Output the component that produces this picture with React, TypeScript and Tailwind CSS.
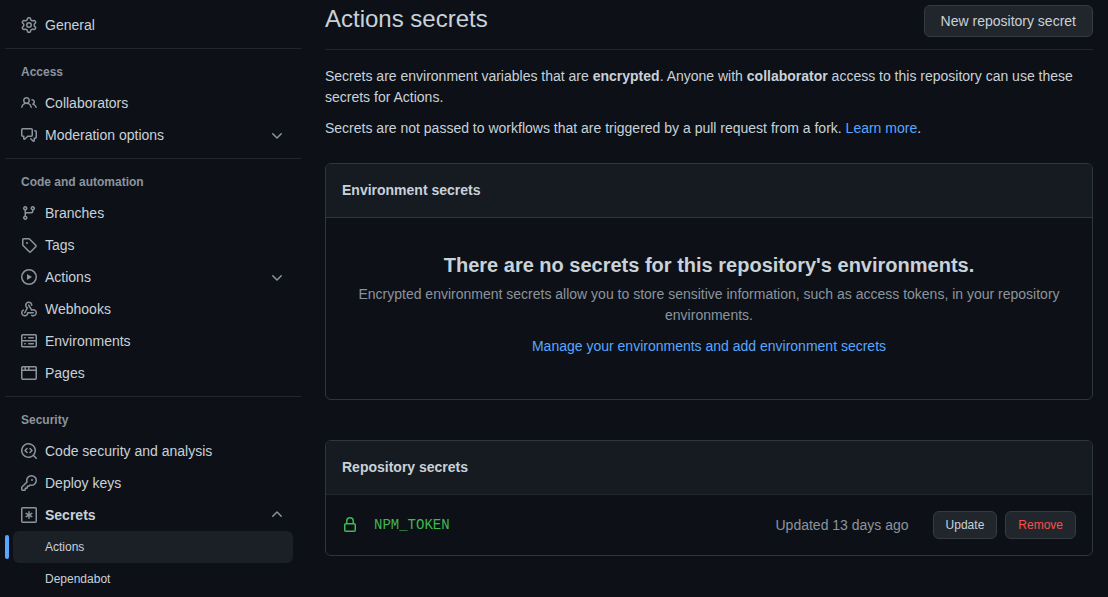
import type { ReactNode } from "react";

type IconName =
  | "gear" | "people" | "discussion" | "branch" | "tag" | "play" | "webhook" | "server"
  | "browser" | "codescan" | "key" | "asterisk" | "chevronDown" | "chevronUp" | "lock";

const iconPaths: Record<IconName, string[]> = {
  gear: [
    "M7.429 1.525a6.593 6.593 0 011.142 0c.036.003.108.036.137.146l.289 1.105c.147.56.55.967.997 1.189.174.086.341.183.501.29.417.278.97.423 1.53.27l1.102-.303c.11-.03.175.016.195.046.219.31.41.641.573.989.014.031.022.11-.059.19l-.815.806c-.411.406-.562.957-.53 1.456a4.588 4.588 0 010 .582c-.032.499.119 1.05.53 1.456l.815.806c.08.08.073.159.059.19a6.494 6.494 0 01-.573.99c-.02.029-.086.074-.195.045l-1.103-.303c-.559-.153-1.112-.008-1.529.27-.16.107-.327.204-.5.29-.449.222-.851.628-.998 1.189l-.289 1.105c-.029.11-.101.143-.137.146a6.613 6.613 0 01-1.142 0c-.036-.003-.108-.037-.137-.146l-.289-1.105c-.147-.56-.55-.967-.997-1.189a4.502 4.502 0 01-.501-.29c-.417-.278-.97-.423-1.53-.27l-1.102.303c-.11.03-.175-.016-.195-.046a6.492 6.492 0 01-.573-.989c-.014-.031-.022-.11.059-.19l.815-.806c.411-.406.562-.957.53-1.456a4.587 4.587 0 010-.582c.032-.499-.119-1.05-.53-1.456l-.815-.806c-.08-.08-.073-.159-.059-.19a6.44 6.44 0 01.573-.99c.02-.029.086-.075.195-.045l1.103.303c.559.153 1.112.008 1.529-.27.16-.107.327-.204.5-.29.449-.222.851-.628.998-1.189l.289-1.105c.029-.11.101-.143.137-.146zM8 0c-.236 0-.47.01-.701.03-.743.065-1.29.615-1.458 1.261l-.29 1.106c-.017.066-.078.158-.211.224a5.994 5.994 0 00-.668.386c-.123.082-.233.09-.3.071L3.27 2.776c-.644-.177-1.392.02-1.82.63a7.977 7.977 0 00-.704 1.217c-.315.675-.111 1.422.363 1.891l.815.806c.05.048.098.147.088.294a6.084 6.084 0 000 .772c.01.147-.038.246-.088.294l-.815.806c-.474.469-.678 1.216-.363 1.891.2.428.436.835.704 1.218.428.609 1.176.806 1.82.63l1.103-.303c.066-.019.176-.011.299.071.213.143.436.272.668.386.133.066.194.158.212.224l.289 1.106c.169.646.715 1.196 1.458 1.26a8.094 8.094 0 001.402 0c.743-.064 1.29-.614 1.458-1.26l.29-1.106c.017-.066.078-.158.211-.224a5.98 5.98 0 00.668-.386c.123-.082.233-.09.3-.071l1.102.302c.644.177 1.392-.02 1.82-.63.268-.382.505-.789.704-1.217.315-.675.111-1.422-.364-1.891l-.814-.806c-.05-.048-.098-.147-.088-.294a6.1 6.1 0 000-.772c-.01-.147.039-.246.088-.294l.814-.806c.475-.469.679-1.216.364-1.891a7.992 7.992 0 00-.704-1.218c-.428-.609-1.176-.806-1.82-.63l-1.103.303c-.066.019-.176.011-.299-.071a5.991 5.991 0 00-.668-.386c-.133-.066-.194-.158-.212-.224L10.16 1.29C9.99.645 9.444.095 8.701.031A8.094 8.094 0 008 0zm1.5 8a1.5 1.5 0 11-3 0 1.5 1.5 0 013 0zM11 8a3 3 0 11-6 0 3 3 0 016 0z",
  ],
  people: [
    "M5.5 3.5a2 2 0 100 4 2 2 0 000-4zM2 5.5a3.5 3.5 0 115.898 2.549 5.507 5.507 0 013.034 4.084.75.75 0 11-1.482.235 4.001 4.001 0 00-7.9 0 .75.75 0 01-1.482-.236A5.507 5.507 0 013.102 8.05 3.49 3.49 0 012 5.5zM11 4a.75.75 0 100 1.5 1.5 1.5 0 01.666 2.844.75.75 0 00-.416.672v.352a.75.75 0 00.574.73c1.2.289 2.162 1.2 2.522 2.372a.75.75 0 101.434-.44 5.01 5.01 0 00-2.56-3.012A3 3 0 0011 4z",
  ],
  discussion: [
    "M1.5 2.75a.25.25 0 01.25-.25h8.5a.25.25 0 01.25.25v5.5a.25.25 0 01-.25.25h-3.5a.75.75 0 00-.53.22L3.5 11.44V9.25a.75.75 0 00-.75-.75h-1a.25.25 0 01-.25-.25v-5.5zM1.75 1A1.75 1.75 0 000 2.75v5.5C0 9.216.784 10 1.75 10H2v1.543a1.457 1.457 0 002.487 1.03L7.061 10h3.189A1.75 1.75 0 0012 8.25v-5.5A1.75 1.75 0 0010.25 1h-8.5zM14.5 4.75a.25.25 0 00-.25-.25h-.5a.75.75 0 110-1.5h.5c.966 0 1.75.784 1.75 1.75v5.5A1.75 1.75 0 0114.25 12H14v1.543a1.457 1.457 0 01-2.487 1.03L9.22 12.28a.75.75 0 111.06-1.06l2.22 2.22v-2.19a.75.75 0 01.75-.75h1a.25.25 0 00.25-.25v-5.5z",
  ],
  branch: [
    "M11.75 2.5a.75.75 0 100 1.5.75.75 0 000-1.5zm-2.25.75a2.25 2.25 0 113 2.122V6A2.5 2.5 0 0110 8.5H6a1 1 0 00-1 1v1.128a2.251 2.251 0 11-1.5 0V5.372a2.25 2.25 0 111.5 0v1.836A2.492 2.492 0 016 7h4a1 1 0 001-1v-.628A2.25 2.25 0 019.5 3.25zM4.25 12a.75.75 0 100 1.5.75.75 0 000-1.5zM3.5 3.25a.75.75 0 111.5 0 .75.75 0 01-1.5 0z",
  ],
  tag: [
    "M2.5 7.775V2.75a.25.25 0 01.25-.25h5.025a.25.25 0 01.177.073l6.25 6.25a.25.25 0 010 .354l-5.025 5.025a.25.25 0 01-.354 0l-6.25-6.25a.25.25 0 01-.073-.177zm-1.5 0V2.75C1 1.784 1.784 1 2.75 1h5.025c.464 0 .91.184 1.238.513l6.25 6.25a1.75 1.75 0 010 2.474l-5.026 5.026a1.75 1.75 0 01-2.474 0l-6.25-6.25A1.75 1.75 0 011 7.775zM6 5a1 1 0 100 2 1 1 0 000-2z",
  ],
  play: [
    "M1.5 8a6.5 6.5 0 1113 0 6.5 6.5 0 01-13 0zM8 0a8 8 0 100 16A8 8 0 008 0zM6.379 5.227A.25.25 0 006 5.442v5.117a.25.25 0 00.379.214l4.264-2.559a.25.25 0 000-.428L6.379 5.227z",
  ],
  webhook: [
    "M5.5 4.25a2.25 2.25 0 014.5 0 .75.75 0 001.5 0 3.75 3.75 0 10-6.14 2.889l-2.272 4.258a.75.75 0 001.324.706L7 7.25a.75.75 0 00-.309-1.015A2.25 2.25 0 015.5 4.25z",
    "M7.364 3.607a.75.75 0 011.03.257l2.608 4.349a3.75 3.75 0 11-.628 6.785.75.75 0 01.752-1.299 2.25 2.25 0 10-.033-3.88.75.75 0 01-1.03-.256L7.107 4.636a.75.75 0 01.257-1.03z",
    "M2.9 8.776A.75.75 0 012.625 9.8 2.25 2.25 0 106 11.75a.75.75 0 01.75-.751h5.5a.75.75 0 010 1.5H7.425a3.751 3.751 0 11-5.55-3.998.75.75 0 011.024.274z",
  ],
  server: [
    "M1.75 1A1.75 1.75 0 000 2.75v4c0 .372.116.717.314 1a1.742 1.742 0 00-.314 1v4c0 .966.784 1.75 1.75 1.75h12.5A1.75 1.75 0 0016 12.75v-4c0-.372-.116-.717-.314-1 .198-.283.314-.628.314-1v-4A1.75 1.75 0 0014.25 1H1.75zm0 7.5a.25.25 0 00-.25.25v4c0 .138.112.25.25.25h12.5a.25.25 0 00.25-.25v-4a.25.25 0 00-.25-.25H1.75zM1.5 2.75a.25.25 0 01.25-.25h12.5a.25.25 0 01.25.25v4a.25.25 0 01-.25.25H1.75a.25.25 0 01-.25-.25v-4zm5.5 2A.75.75 0 017.75 4h4.5a.75.75 0 010 1.5h-4.5A.75.75 0 017 4.75zM7.75 10a.75.75 0 000 1.5h4.5a.75.75 0 000-1.5h-4.5zM3 4.75A.75.75 0 013.75 4h.5a.75.75 0 010 1.5h-.5A.75.75 0 013 4.75zM3.75 10a.75.75 0 000 1.5h.5a.75.75 0 000-1.5h-.5z",
  ],
  browser: [
    "M0 2.75C0 1.784.784 1 1.75 1h12.5c.966 0 1.75.784 1.75 1.75v10.5A1.75 1.75 0 0114.25 15H1.75A1.75 1.75 0 010 13.25V2.75zm1.75-.25a.25.25 0 00-.25.25V4.5h2v-2H1.75zM5 2.5v2h2v-2H5zm3.5 0v2h6V2.75a.25.25 0 00-.25-.25H8.5zm6 3.5h-13v7.25c0 .138.112.25.25.25h12.5a.25.25 0 00.25-.25V6z",
  ],
  codescan: [
    "M8.47 4.97a.75.75 0 000 1.06L9.94 7.5 8.47 8.97a.75.75 0 101.06 1.06l2-2a.75.75 0 000-1.06l-2-2a.75.75 0 00-1.06 0zM6.53 6.03a.75.75 0 00-1.06-1.06l-2 2a.75.75 0 000 1.06l2 2a.75.75 0 101.06-1.06L5.06 7.5l1.47-1.47z",
    "M12.246 13.307a7.5 7.5 0 111.06-1.06l2.474 2.473a.75.75 0 11-1.06 1.06l-2.474-2.473zM1.5 7.5a6 6 0 1110.386 4.094.75.75 0 00-.292.293A6 6 0 011.5 7.5z",
  ],
  key: [
    "M6.5 5.5a4 4 0 112.731 3.795.75.75 0 00-.768.18L7.44 10.5H6.25a.75.75 0 00-.75.75v1.19l-.06.06H4.25a.75.75 0 00-.75.75v1.19l-.06.06H1.75a.25.25 0 01-.25-.25v-1.69l5.024-5.023a.75.75 0 00.181-.768A3.995 3.995 0 016.5 5.5zm4-5.5a5.5 5.5 0 00-5.348 6.788L.22 11.72a.75.75 0 00-.22.53v2C0 15.216.784 16 1.75 16h2a.75.75 0 00.53-.22l.5-.5a.75.75 0 00.22-.53V14h.75a.75.75 0 00.53-.22l.5-.5a.75.75 0 00.22-.53V12h.75a.75.75 0 00.53-.22l.932-.932A5.5 5.5 0 1010.5 0zm.5 6a1 1 0 100-2 1 1 0 000 2z",
  ],
  asterisk: [
    "M0 1.75C0 .784.784 0 1.75 0h12.5C15.216 0 16 .784 16 1.75v12.5A1.75 1.75 0 0114.25 16H1.75A1.75 1.75 0 010 14.25V1.75zm1.75-.25a.25.25 0 00-.25.25v12.5c0 .138.112.25.25.25h12.5a.25.25 0 00.25-.25V1.75a.25.25 0 00-.25-.25H1.75zM8 4a.75.75 0 01.75.75V6.7l1.69-.975a.75.75 0 01.75 1.3L9.5 8l1.69.976a.75.75 0 01-.75 1.298L8.75 9.3v1.951a.75.75 0 01-1.5 0V9.299l-1.69.976a.75.75 0 01-.75-1.3L6.5 8l-1.69-.975a.75.75 0 01.75-1.3l1.69.976V4.75A.75.75 0 018 4z",
  ],
  chevronDown: [
    "M12.78 6.22a.75.75 0 010 1.06l-4.25 4.25a.75.75 0 01-1.06 0L3.22 7.28a.75.75 0 011.06-1.06L8 9.94l3.72-3.72a.75.75 0 011.06 0z",
  ],
  chevronUp: [
    "M3.22 9.78a.75.75 0 010-1.06l4.25-4.25a.75.75 0 011.06 0l4.25 4.25a.75.75 0 01-1.06 1.06L8 6.06 4.28 9.78a.75.75 0 01-1.06 0z",
  ],
  lock: [
    "M4 4v2h-.25A1.75 1.75 0 002 7.75v5.5c0 .966.784 1.75 1.75 1.75h8.5A1.75 1.75 0 0014 13.25v-5.5A1.75 1.75 0 0012.25 6H12V4a4 4 0 10-8 0zm6.5 2V4a2.5 2.5 0 10-5 0v2h5zM12 7.5h.25a.25.25 0 01.25.25v5.5a.25.25 0 01-.25.25h-8.5a.25.25 0 01-.25-.25v-5.5a.25.25 0 01.25-.25H12z",
  ],
};

function Icon({ name, className = "text-[#8b949e]" }: { name: IconName; className?: string }) {
  return (
    <svg viewBox="0 0 16 16" className={`size-4 shrink-0 fill-current ${className}`} fillRule="evenodd" aria-hidden="true">
      {iconPaths[name].map((d) => (
        <path key={d} d={d} fillRule="evenodd" />
      ))}
    </svg>
  );
}

const rowClass = "flex h-8 w-full items-center gap-2 rounded-md px-2 text-left text-sm hover:bg-[#161b22]";

function NavLink({ icon, children }: { icon: IconName; children: ReactNode }) {
  return (
    <li>
      <a href="#" className={rowClass}>
        <Icon name={icon} />
        {children}
      </a>
    </li>
  );
}

function NavToggle({ icon, open = false, children }: { icon: IconName; open?: boolean; children: ReactNode }) {
  return (
    <button type="button" aria-expanded={open} className={`${rowClass} ${open ? "font-bold" : ""}`}>
      <Icon name={icon} />
      <span className="grow">{children}</span>
      <Icon name={open ? "chevronUp" : "chevronDown"} />
    </button>
  );
}

function NavGroup({ title, children }: { title: string; children: ReactNode }) {
  return (
    <section className="mt-[7px] border-t border-[#21262d] px-2">
      <h3 className="px-2 pt-3.5 pb-1.5 text-xs leading-[18px] font-bold text-[#8b949e]">{title}</h3>
      <ul>{children}</ul>
    </section>
  );
}

function Sidebar() {
  return (
    <nav aria-label="Repository settings" className="w-[296px] shrink-0 pt-1">
      <ul className="px-2">
        <NavLink icon="gear">General</NavLink>
      </ul>
      <NavGroup title="Access">
        <NavLink icon="people">Collaborators</NavLink>
        <li>
          <NavToggle icon="discussion">Moderation options</NavToggle>
        </li>
      </NavGroup>
      <NavGroup title="Code and automation">
        <NavLink icon="branch">Branches</NavLink>
        <NavLink icon="tag">Tags</NavLink>
        <li>
          <NavToggle icon="play">Actions</NavToggle>
        </li>
        <NavLink icon="webhook">Webhooks</NavLink>
        <NavLink icon="server">Environments</NavLink>
        <NavLink icon="browser">Pages</NavLink>
      </NavGroup>
      <NavGroup title="Security">
        <NavLink icon="codescan">Code security and analysis</NavLink>
        <NavLink icon="key">Deploy keys</NavLink>
        <li>
          <NavToggle icon="asterisk" open>
            Secrets
          </NavToggle>
          <ul className="text-xs">
            <li className="relative">
              <span className="absolute top-1 -left-2 h-6 w-1 rounded-md bg-[#58a6ff]" />
              <a href="#" aria-current="page" className="flex h-8 items-center rounded-md bg-[#1b1f26] pr-2 pl-8">
                Actions
              </a>
            </li>
            <li>
              <a href="#" className="flex h-8 items-center rounded-md pr-2 pl-8 hover:bg-[#161b22]">
                Dependabot
              </a>
            </li>
          </ul>
        </li>
      </NavGroup>
    </nav>
  );
}

function Panel({ title, children }: { title: string; children: ReactNode }) {
  return (
    <section className="overflow-hidden rounded-md border border-[#30363d]">
      <h3 className="bg-[#161b22] p-4 text-sm leading-[21px] font-bold">{title}</h3>
      {children}
    </section>
  );
}

const buttonClass = "rounded-md border border-[#363b42] bg-[#21262d] hover:bg-[#30363d]";

export default function App() {
  return (
    <div className="flex min-h-screen gap-6 bg-[#0d1117] pt-[5px] pr-[15px] pl-[5px] font-['Liberation_Sans',Arial,sans-serif] text-sm leading-[21px] text-[#c9d1d9]">
      <Sidebar />
      <main className="min-w-0 grow">
        <header className="flex items-start justify-between border-b border-[#21262d] pb-3">
          <h2 className="text-2xl leading-7">Actions secrets</h2>
          <button type="button" className={`h-8 px-4 ${buttonClass}`}>
            New repository secret
          </button>
        </header>
        <p className="mt-4">
          Secrets are environment variables that are <strong>encrypted</strong>. Anyone with{" "}
          <strong>collaborator</strong> access to this repository can use these secrets for Actions.
        </p>
        <p className="mt-2.5">
          Secrets are not passed to workflows that are triggered by a pull request from a fork.{" "}
          <a href="#" className="text-[#58a6ff] hover:underline">Learn more</a>.
        </p>
        <div className="mt-6 flex flex-col gap-10">
          <Panel title="Environment secrets">
            <div className="border-t border-[#30363d] px-8 pt-8 pb-[42px] text-center">
              <h4 className="mb-1 text-xl leading-[30px] font-bold">
                There are no secrets for this repository's environments.
              </h4>
              <p className="mb-2.5 text-[#8b949e]">
                Encrypted environment secrets allow you to store sensitive information, such as access tokens, in your
                repository environments.
              </p>
              <a href="#" className="block text-[#58a6ff] hover:underline">
                Manage your environments and add environment secrets
              </a>
            </div>
          </Panel>
          <Panel title="Repository secrets">
            <ul>
              <li className="flex items-center border-t border-[#21262d] p-4">
                <Icon name="lock" className="text-[#3fb950]" />
                <code className="ml-4 grow font-['Liberation_Mono',monospace] text-sm leading-[21px] text-[#3fb950]">
                  NPM_TOKEN
                </code>
                <span className="mr-6 text-[#8b949e]">Updated 13 days ago</span>
                <button type="button" className={`mr-2 h-7 px-3 text-xs ${buttonClass}`}>
                  Update
                </button>
                <button type="button" className={`h-7 px-3 text-xs text-[#f85149] ${buttonClass}`}>
                  Remove
                </button>
              </li>
            </ul>
          </Panel>
        </div>
      </main>
    </div>
  );
}
